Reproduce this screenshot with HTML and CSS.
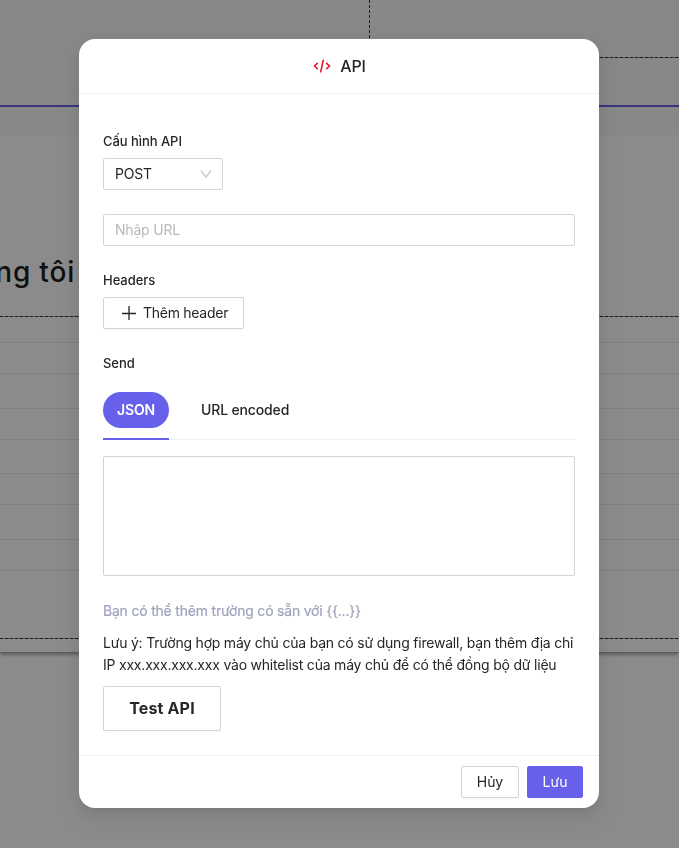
FILE: index.html
```html
<!DOCTYPE html>
<html lang="vi">
<head>
<meta charset="utf-8">
<title>API</title>
<link rel="stylesheet" href="styles.css">
</head>
<body>
<div class="page">
  <div class="canvas-top">
    <div class="canvas-cell"></div>
    <div class="canvas-cell canvas-cell-right"></div>
  </div>
  <div class="canvas-strip"></div>
  <div class="section">
    <div class="section-title"><span>ng tôi</span></div>
    <div class="guide"></div>
    <div class="rows">
      <div class="row first"></div>
      <div class="row"></div>
      <div class="row tall"></div>
      <div class="row"></div>
      <div class="row mid"></div>
      <div class="row"></div>
      <div class="row tall"></div>
      <div class="row"></div>
    </div>
    <div class="guide"></div>
  </div>
</div>
<div class="overlay">
  <div class="modal">
    <header class="modal-header">
      <svg class="code-icon" viewBox="0 0 18 14" width="18" height="14" fill="none" stroke="#e8132f" stroke-width="1.6" stroke-linecap="round" stroke-linejoin="round"><path d="M4.4 4.4 1.3 7l3.1 2.6M13.6 4.4 16.7 7l-3.1 2.6M10.3 1.2 7.7 12.8"/></svg>
      <h1>API</h1>
    </header>
    <main class="modal-body">
      <label class="label">Cấu hình API</label>
      <div class="select"><span>POST</span>
        <svg viewBox="0 0 12 10" width="12" height="10" fill="none" stroke="#c2c2c2" stroke-width="1.1"><path d="M1 1.4 6 8.2 11 1.4"/></svg>
      </div>
      <input class="input" type="text" placeholder="Nhập URL">
      <label class="label">Headers</label>
      <button class="button add-button">
        <svg viewBox="0 0 14 14" width="14" height="14" fill="none" stroke="#262626" stroke-width="1.3"><path d="M7 0v14M0 7.5h14"/></svg>
        <span>Thêm header</span>
      </button>
      <label class="label send-label">Send</label>
      <div class="tabs">
        <div class="tab active"><span class="pill">JSON</span></div>
        <div class="tab"><span class="tab-text">URL encoded</span></div>
      </div>
      <textarea class="textarea"></textarea>
      <p class="hint">Bạn có thể thêm trường có sẵn với {{...}}</p>
      <p class="note">Lưu ý: Trường hợp máy chủ của bạn có sử dụng firewall, bạn thêm địa chỉ<br>IP xxx.xxx.xxx.xxx vào whitelist của máy chủ để có thể đồng bộ dữ liệu</p>
      <button class="button test-button">Test API</button>
    </main>
    <footer class="modal-footer">
      <button class="button cancel">Hủy</button>
      <button class="button primary">Lưu</button>
    </footer>
  </div>
</div>
</body>
</html>
```
FILE: styles.css
```css
* { box-sizing: border-box; }
body {
  margin: 0;
  height: 848px;
  overflow: hidden;
  font: 14px/22px Inter, "Liberation Sans", sans-serif;
  color: #262626;
  background: #fff;
}
.page { height: 848px; background: #fefefe; overflow: hidden; }
.canvas-top { display: flex; height: 107px; border-bottom: 2px solid #6760ea; background: #f8f8f8; }
.canvas-cell { width: 370px; background: repeating-linear-gradient(#333 0 3px, transparent 3px 5px) right / 1px 100% no-repeat; }
.canvas-cell-right { flex: 1; width: auto; height: 58px; background: repeating-linear-gradient(90deg, #333 0 3px, #a4a4a4 3px 5px) bottom / 100% 1px no-repeat; }
.canvas-strip { height: 28px; background: #f7f7f7; }
.section { height: 518px; border-bottom: 1px solid #a8a8a8; box-shadow: 0 3px 3px -1px rgba(0, 0, 0, .3); }
.section-title { display: flex; align-items: flex-end; height: 168px; width: 75px; justify-content: flex-end; padding-bottom: 11px; }
.section-title span { font-size: 28px; line-height: 40px; font-weight: 500; letter-spacing: .8px; white-space: nowrap; color: #1c1c1c; }
.guide { height: 1px; margin-top: 13px; background: repeating-linear-gradient(90deg, #333 0 3px, #a4a4a4 3px 5px); }
.rows + .guide { margin-top: 67px; }
.row { height: 31px; border-bottom: 1px solid #e8e8e8; }
.row.first { height: 26px; }
.row.tall { height: 35px; }
.row.mid { height: 34px; }
.overlay { position: fixed; inset: 0; padding-top: 39px; background: rgba(0, 0, 0, .45); }
.modal {
  display: flex;
  flex-direction: column;
  width: 520px;
  height: 769px;
  margin-left: 79px;
  background: #fff;
  border-radius: 16px;
  box-shadow: 0 3px 6px -4px rgba(0, 0, 0, .12), 0 6px 16px rgba(0, 0, 0, .08), 0 9px 28px 8px rgba(0, 0, 0, .05);
}
.modal-header { display: flex; align-items: center; justify-content: center; gap: 9px; height: 55px; padding-left: 1px; border-bottom: 1px solid #f0f0f0; }
.modal-header h1 { margin: 0; font-size: 16px; font-weight: 500; line-height: 22px; letter-spacing: -.2px; }
.modal-body { display: flex; flex-direction: column; align-items: flex-start; flex: 1; padding: 36px 24px 0; }
.label { font-size: 13px; font-weight: 500; line-height: 22px; letter-spacing: -.05px; }
.select, .input, .button, .textarea { border: 1px solid #d3d3d3; border-radius: 2px; background: #fff; color: #262626; font-family: inherit; font-size: 14px; }
.select { display: flex; align-items: center; justify-content: space-between; width: 120px; height: 32px; margin: 6px 0 24px; padding: 0 10px 0 11px; letter-spacing: -.2px; }
.input { width: 100%; height: 32px; margin-bottom: 23px; padding: 0 11px 1px; outline: 0; letter-spacing: -.2px; }
.input::placeholder { color: #b8b8b8; }
.button { display: flex; align-items: center; justify-content: center; height: 32px; padding: 0; line-height: 22px; box-shadow: 0 2px 0 rgba(0, 0, 0, .016); }
.add-button { width: 141px; justify-content: flex-start; gap: 7px; margin-top: 6px; padding-left: 18px; letter-spacing: -.27px; }
.send-label { margin-top: 23px; }
.tabs { display: flex; gap: 32px; width: 100%; height: 66px; padding-top: 18px; border-bottom: 1px solid #f0f0f0; }
.tab { height: 48px; font-weight: 500; letter-spacing: -.15px; }
.tab.active { width: 66px; border-bottom: 2px solid #6760ea; }
.pill { display: block; height: 36px; border-radius: 18px; background: #6760ea; color: #fff; font-weight: 600; line-height: 36px; text-align: center; }
.tab-text { line-height: 36px; }
.textarea { display: block; width: 100%; height: 120px; margin-top: 16px; resize: none; outline: 0; }
.hint { margin: 24px 0 10px; color: #a0a3bd; letter-spacing: -.2px; -webkit-text-stroke: .2px #a0a3bd; }
.note { margin: 0; white-space: nowrap; letter-spacing: -.21px; }
.test-button { width: 118px; height: 45px; margin-top: 10px; padding-bottom: 2px; font-size: 16px; font-weight: 700; letter-spacing: .15px; }
.modal-footer { display: flex; justify-content: flex-end; gap: 8px; height: 53px; padding: 10px 16px; border-top: 1px solid #f0f0f0; }
.cancel { width: 58px; letter-spacing: -.1px; }
.primary { width: 56px; border-color: #6760ea; background: #6760ea; color: #fff; }
```
